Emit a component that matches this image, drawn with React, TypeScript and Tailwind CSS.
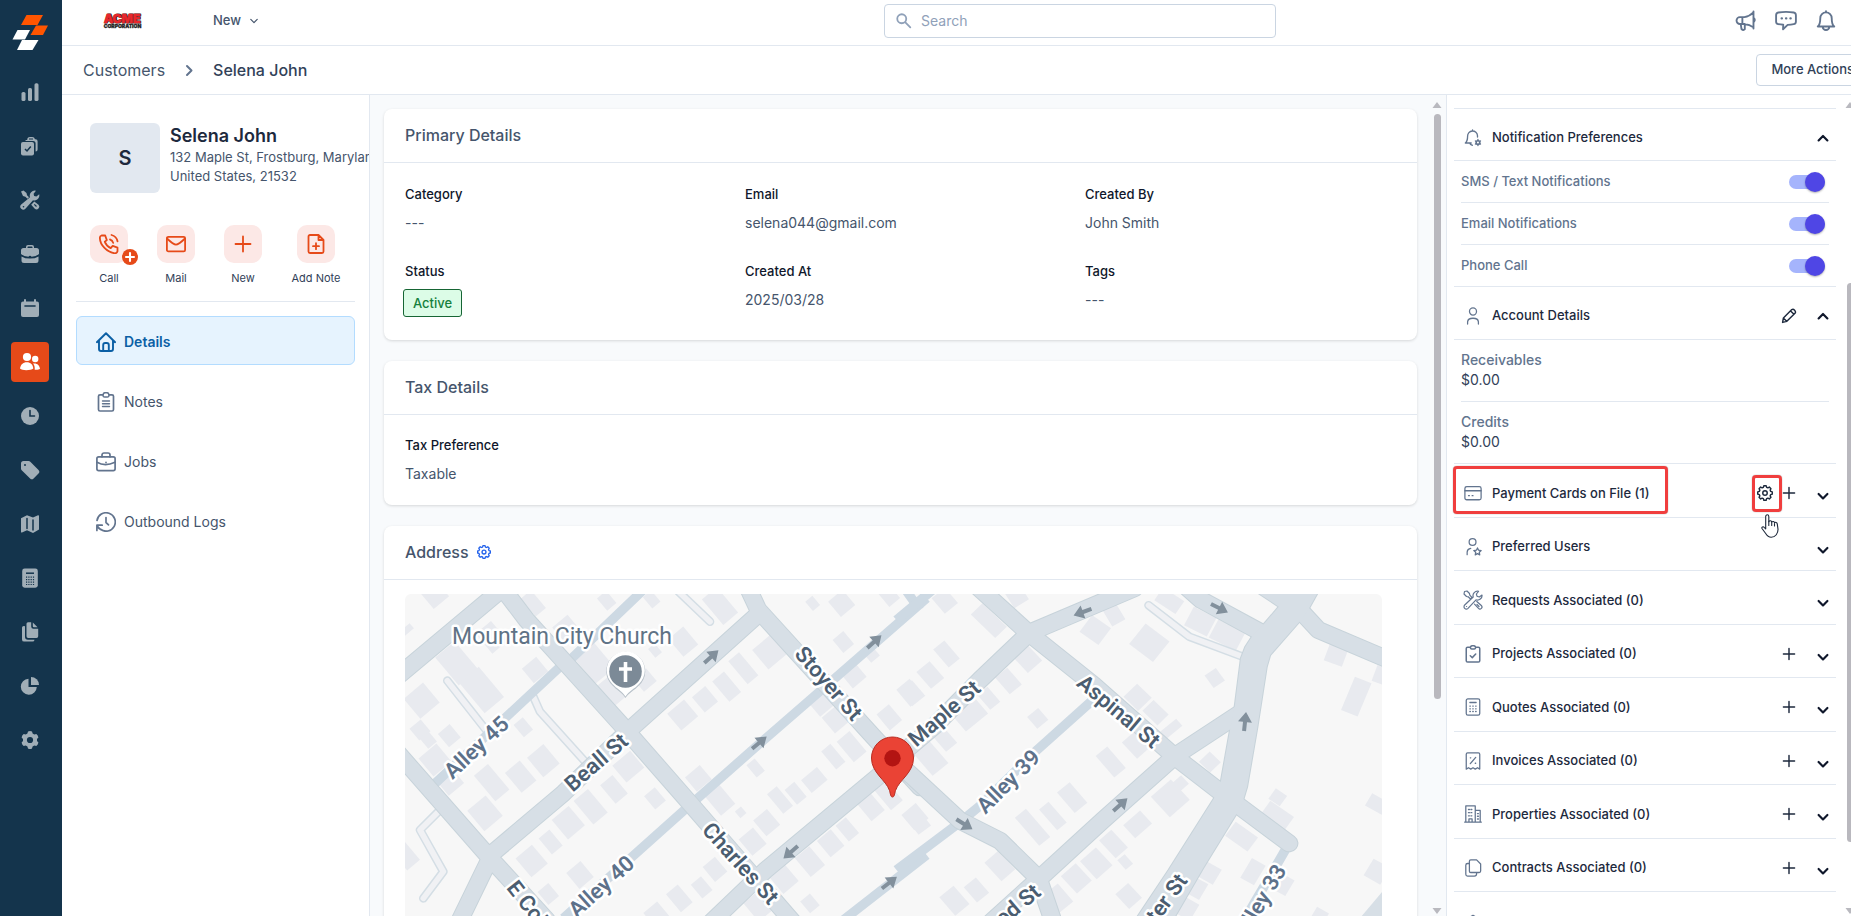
import React from "react";

type Kids = { children: React.ReactNode; className?: string; w?: number };

/* Outline icon on a 20 unit grid */
function Line({ children, className = "size-5", w = 1.5 }: Kids) {
  return (
    <svg viewBox="0 0 20 20" className={className} fill="none" stroke="currentColor" strokeWidth={w} strokeLinecap="round" strokeLinejoin="round" aria-hidden="true">
      {children}
    </svg>
  );
}

/* Solid icon on a 20 unit grid */
function Solid({ children, className = "size-5" }: Kids) {
  return (
    <svg viewBox="0 0 20 20" className={className} fill="currentColor" aria-hidden="true">
      {children}
    </svg>
  );
}

const NAVY = "#14344c";

/* Eight-toothed cog outline */
const COG =
  "M" +
  Array.from({ length: 8 }, (_, k) =>
    [[-16, 7.4], [-9, 9.2], [9, 9.2], [16, 7.4]]
      .map(([d, r]) => {
        const a = ((k * 45 + d) * Math.PI) / 180;
        return `${(10 + r * Math.sin(a)).toFixed(2)} ${(10 - r * Math.cos(a)).toFixed(2)}`;
      })
      .join("L"),
  ).join("L") +
  "z";

const railIcons: { name: string; icon: React.ReactNode; active?: boolean }[] = [
  { name: "Dashboard", icon: <Solid><rect x="1.5" y="10" width="4" height="9" rx="1.6" /><rect x="8" y="6" width="4" height="13" rx="1.6" /><rect x="14.5" y="1.2" width="4" height="17.8" rx="1.6" /></Solid> },
  {
    name: "Requests",
    icon: (
      <Solid>
        <path d="M6 4h1.200A3 3 0 0 1 10 1h2.200A3 3 0 0 1 15 3.200h.6a2 2 0 0 1 2 2V13.500a2 2 0 0 1-2 2V7.500a2.500 2.500 0 0 0-2.500-2.500H5.200A2 2 0 0 1 6 4z" />
        <rect x="1" y="6" width="13" height="13.500" rx="2" />
        <path d="M5 13l2 2 3.800-4.500" fill="none" stroke={NAVY} strokeWidth="1.500" />
        <path d="M9 3h4" stroke={NAVY} strokeWidth="1" />
      </Solid>
    ),
  },
  {
    name: "Tools",
    icon: (
      <Solid>
        <path d="M1 1.500L3.500.5 6.500 3l.5 2.200 2 2-1.600 1.600-2-2L3 6z" />
        <path d="M19.200 4.200l-2.800 2.300-2.300-.6-.5-2.200L16 .8a5 5 0 0 0-6 6.400L1.200 14.600a2.900 2.900 0 1 0 4.200 4.200L13 10.200a5 5 0 0 0 6.200-6z" />
        <path d="M14.300 11.400l4.200 3.400a2.700 2.700 0 0 1-3.700 3.900l-3.600-4z" />
        <circle cx="3.500" cy="16.700" r=".8" fill={NAVY} />
        <path d="M14.300 14.300l2.200 2.200" stroke={NAVY} strokeWidth="1.100" />
      </Solid>
    ),
  },
  {
    name: "Jobs",
    icon: (
      <Solid>
        <path d="M6 4V3a2 2 0 0 1 2-2h4a2 2 0 0 1 2 2v1h2.500A2.500 2.500 0 0 1 19 6.500V10q-3 2.500-7.500 2.700-.4-.9-1.500-.9t-1.500.9Q4 12.500 1 10V6.500A2.500 2.500 0 0 1 3.500 4zm1.500 0h5V3.200a.7.7 0 0 0-.7-.7H8.200a.7.7 0 0 0-.7.7z" />
        <path d="M1.500 12.400Q5 14.600 10 14.600t8.500-2.200V16.500a2.500 2.500 0 0 1-2.500 2.500H4a2.500 2.500 0 0 1-2.500-2.500z" />
      </Solid>
    ),
  },
  { name: "Calendar", icon: <Solid><rect x="4" y="1" width="2" height="5" rx="1" /><rect x="14" y="1" width="2" height="5" rx="1" /><rect x="1" y="3.500" width="18" height="15.500" rx="2" /><path d="M5 8h10" stroke={NAVY} strokeWidth="1.600" strokeLinecap="round" /></Solid> },
  { name: "Customers", active: true, icon: <Solid><circle cx="7" cy="5" r="4.100" /><path d="M0 16.500C.5 12.500 3 10.200 6.800 10.200s6.200 2.300 6.500 6.300c-2 2-11.300 2.400-13.300 0z" /><circle cx="15.200" cy="7" r="3.200" /><path d="M13 11.600c3.800-.8 6.600 1.500 7 5.200-1 1-3.500 1.200-5.300.9.200-2.500-.2-4.500-1.700-6.100z" /></Solid> },
  { name: "Timesheets", icon: <Solid><circle cx="10" cy="10" r="9" /><path d="M10 4.500V10h4.500" fill="none" stroke={NAVY} strokeWidth="1.600" strokeLinecap="round" /></Solid> },
  { name: "Price list", icon: <Solid><path d="M1 3.500A2.500 2.500 0 0 1 3.500 1h5a2.500 2.500 0 0 1 1.800.7l8.200 8.400a2.500 2.500 0 0 1 0 3.500l-4.900 4.900a2.500 2.500 0 0 1-3.500 0L1.700 10.300A2.500 2.500 0 0 1 1 8.500z" /><circle cx="5" cy="5" r="1" fill={NAVY} /></Solid> },
  { name: "Map", icon: <Solid><path d="M1 4.200L7 1.200l6 2.300 5-2.200q1-.3 1 .8v13.500l-6 3.400-6-2.700-5 2.200q-1 .3-1-.8z" /><path d="M7 4.500V14.500M13 6V16" stroke={NAVY} strokeWidth="1.500" strokeLinecap="round" /></Solid> },
  { name: "Quotes", icon: <Solid><rect x="2.200" y=".5" width="15.600" height="19.200" rx="2.400" /><path d="M6 5.200h8" stroke={NAVY} strokeWidth="1.500" /><path d="M6 9.200h8.500M6 11.700h8.500M6 14.200h8.500M6 16.500h8.500" stroke={NAVY} strokeWidth="1.200" strokeDasharray="1.200 1.100" /></Solid> },
  { name: "Documents", icon: <Solid><path d="M6.500 1.800A1.600 1.600 0 0 1 8 .3h3.200v4.300a2.200 2.200 0 0 0 2.200 2.200h4.800v7.400a1.700 1.700 0 0 1-1.700 1.700H8.200a1.700 1.700 0 0 1-1.700-1.700z" /><path d="M12.800.6l4.800 4.600h-3.800a1 1 0 0 1-1-1z" /><path d="M5 4.200v10.500a3 3 0 0 0 3 3h6.500a2 2 0 0 1-2 1.900H4.200a2.200 2.200 0 0 1-2.200-2.200V6.200a2 2 0 0 1 3-2z" /></Solid> },
  { name: "Reports", icon: <Solid><path d="M8.500 2.700V11h8.300a8 8 0 1 1-8.300-8.300z" /><path d="M11 1a8 8 0 0 1 8 8h-8z" /></Solid> },
  { name: "Settings", icon: <Solid><path d="M8 1.500q2-1 4 0l.6 2 1.700 1 2-.5q1.800 1.200 2.100 3.400L17 9v2l1.400 1.600q-.3 2.200-2.100 3.400l-2-.5-1.700 1-.6 2q-2 1-4 0l-.6-2-1.700-1-2 .5q-1.800-1.200-2.100-3.400L3 11V9L1.600 7.400Q1.900 5.200 3.700 4l2 .5 1.700-1z" /><circle cx="10" cy="10" r="3.100" fill={NAVY} /></Solid> },
];

function Rail() {
  return (
    <nav aria-label="Main" className="flex w-[62px] shrink-0 flex-col items-center bg-[#14344c] pr-[2px]">
      <a href="#home" aria-label="Home" className="mt-[14px] mb-[22px] h-9">
        <svg viewBox="0 0 36 36" className="size-9" aria-hidden="true">
          <path d="M14.500 1H31l-5.500 10H9z" fill="#ff5500" />
          <path d="M24 11.500h12L31 21H18.500z" fill="#ff5500" />
          <path d="M5.500 16H18l-5 9.500H.5z" fill="#fff" />
          <path d="M10 26h16.500L20.500 36H5z" fill="#fff" />
        </svg>
      </a>
      <ul className="flex flex-col gap-[14px]">
        {railIcons.map((it) => (
          <li key={it.name}>
            <a
              href="#nav"
              aria-label={it.name}
              className={
                it.active
                  ? "flex h-10 w-[38px] items-center justify-center rounded-[4px] bg-[#e64a19] text-white"
                  : "flex h-10 w-[38px] items-center justify-center text-[#a1aeb7]"
              }
            >
              {it.icon}
            </a>
          </li>
        ))}
      </ul>
    </nav>
  );
}

function TopBar() {
  return (
    <header className="flex h-[46px] shrink-0 items-start border-b border-slate-200 bg-white">
      <div className="flex h-[42px] flex-1 items-center pl-9">
        <svg viewBox="0 0 48 22" className="h-[22px] w-12" role="img" aria-label="Acme Corporation">
          <g fontFamily="Inter, sans-serif" fontWeight="900" textAnchor="middle" strokeLinejoin="round">
            <text x="24.800" y="13.300" fontSize="12" fill="#2a1414" stroke="#2a1414" strokeWidth="1">ACME</text>
            <text x="24" y="12.500" fontSize="12" fill="#e8282d" stroke="#e8282d" strokeWidth=".5">ACME</text>
            <text x="24.500" y="18" fontSize="5" fill="#222" stroke="#222" strokeWidth=".3">CORPORATION</text>
          </g>
        </svg>
        <button type="button" className="ml-[67px] flex items-center gap-[5px] text-[13px] font-medium text-slate-600">
          New
          <Line className="size-4"><path d="M6 8l4 4 4-4" /></Line>
        </button>
      </div>
      <label className="mt-1 flex h-[34px] w-[392px] items-center gap-2 rounded-[4px] border border-slate-300 px-[10px] text-slate-400">
        <Line className="size-[18px]" w={2}><circle cx="7.500" cy="7.500" r="5" /><path d="M11.500 11.500L17 17" /></Line>
        <input type="search" aria-label="Search" placeholder="Search" className="min-w-0 flex-1 bg-transparent text-sm outline-none placeholder:text-slate-400" />
      </label>
      <div className="flex h-[42px] w-[581px] items-center justify-end gap-[18px] pr-5 text-slate-500">
        <button type="button" aria-label="Announcements">
          <Line className="size-[22px]" w={1.7}><path d="M4.500 6.500H8.500C12 6 14.500 4.500 16.800 2.200v13.600C14.500 14 12 13 8.500 12.700H4.500a3.100 3.100 0 0 1 0-6.200zM6.700 6.500v6M5.200 12.700l.7 4.600q1.800 1.700 3 .2V12.700M16.800 1.200v15.600M17 7.300q2 1.700 0 3.600" /></Line>
        </button>
        <button type="button" aria-label="Messages">
          <Line className="size-[22px]" w={1.7}><path d="M3 2.300q7-1.300 14 0 2 .4 2 2.400v6q0 2-2 2.200-2.500.4-5.500.6L7.300 17.500l.2-4.100Q5 13.200 3 12.900q-2-.2-2-2.200v-6q0-2 2-2.400z" /><path d="M6 7.700h.3M10 7.700h.3M14 7.700h.3" strokeWidth="2" /></Line>
        </button>
        <button type="button" aria-label="Notifications">
          <Line className="size-[22px]" w={1.7}><path d="M2.500 15h15q-2.300-1.700-2.300-7.500A5.200 5.200 0 0 0 10 2.200a5.200 5.200 0 0 0-5.200 5.300Q4.800 13.300 2.500 15zM7 15.200a3 3 0 0 0 6 0M10 1v1" /></Line>
        </button>
      </div>
    </header>
  );
}

function Crumbs() {
  return (
    <div className="flex h-[49px] shrink-0 items-center justify-between border-b border-slate-200 bg-white pl-[21px] text-slate-700">
      <nav aria-label="Breadcrumb" className="flex items-center pb-px text-base leading-6">
        <a href="#customers" className="text-slate-600">Customers</a>
        <Line className="mx-[14px] size-5 text-slate-500" w={2}><path d="M8 6l4.500 4.500L8 15" /></Line>
        <span className="font-medium">Selena John</span>
      </nav>
      <button type="button" className="-mr-3 h-8 rounded-[4px] border border-slate-300 px-[14px] text-[13px] font-medium">
        More Actions
      </button>
    </div>
  );
}

const actions = [
  { name: "Call", w: "w-[38px]", badge: true, icon: <Line w={1.8}><path d="M2.500 1.500h3.700l1.600 4.600-2 1.700q1.700 4.200 5.900 6.300l2-2.200 4.800 1.800v3.600q-.5 2-2.600 2C8.500 18.500.500 11 .9 3.400q.1-1.500 1.600-1.900zM11 5.500q2.500.6 3.200 3.400M12.500 1q5 1.300 6 6.300" /></Line> },
  { name: "Mail", w: "w-[38px]", icon: <Line w={1.8}><rect x=".9" y="2.800" width="18.200" height="14.600" rx="1.500" /><path d="M1 4.500q6.500 6.200 9 6.200t9-6.200" /></Line> },
  { name: "New", w: "w-[38px]", icon: <Line w={1.8}><path d="M10 2.500v15M2.500 10h15" /></Line> },
  { name: "Add Note", w: "w-[50px]", icon: <Line w={1.8}><path d="M12.500 1H4A1.500 1.500 0 0 0 2.500 2.500v15A1.500 1.500 0 0 0 4 19h12a1.500 1.500 0 0 0 1.500-1.500V6zM12.500 1v5h5M10 9.200v6M7 12.200h6" /></Line> },
];

const tabs = [
  { name: "Details", active: true, icon: <Line w={1.9}><path d="M.9 10.200L10 1.200l9.100 9M3 8.500V17a2 2 0 0 0 2 2h10a2 2 0 0 0 2-2V8.500M7.200 19v-6a2 2 0 0 1 2-2h1.600a2 2 0 0 1 2 2v6" /></Line> },
  { name: "Notes", icon: <Line w={1.7}><path d="M7 2.800H4a1.500 1.500 0 0 0-1.500 1.500v13.200A1.500 1.500 0 0 0 4 19h12a1.500 1.500 0 0 0 1.500-1.500V4.300A1.500 1.500 0 0 0 16 2.800h-3" /><path d="M7 3.800Q7 1 8.800.8h2.400Q13 1 13 3.800q-.2 1.200-1.500 1.200h-3Q7.200 5 7 3.800zM6.500 9h7M6.500 11.700h7M6.500 14.500h7" strokeWidth="1.400" /></Line> },
  { name: "Jobs", icon: <Line w={1.7}><rect x=".9" y="4.800" width="18.200" height="13.800" rx="1.800" /><path d="M6 4.800V3a2 2 0 0 1 2-2h4a2 2 0 0 1 2 2v1.800M1 10.300q8 4.600 18 0M10 10.300v.2" /></Line> },
  { name: "Outbound Logs", icon: <Line w={1.7}><path d="M1 8.500A9.200 9.200 0 1 1 4.500 17.300M.9 18.500v-5.300h5.300M1 13.500q1.500 3 4 4.200M10 5.500v5l2.500 2.300" /></Line> },
];

function ProfilePanel() {
  return (
    <aside className="w-[308px] shrink-0 overflow-hidden border-r border-slate-200 bg-white pl-[14px]">
      <div className="flex pt-7 pl-[14px]">
        <div className="flex size-[70px] shrink-0 items-center justify-center rounded-[6px] bg-slate-200 text-xl font-semibold text-slate-800">S</div>
        <div className="ml-[10px] whitespace-nowrap text-[13px] leading-[19px] text-slate-600">
          <h1 className="text-lg leading-[25px] font-semibold text-slate-800">Selena John</h1>
          <p>132 Maple St, Frostburg, Maryland,</p>
          <p>United States, 21532</p>
        </div>
      </div>
      <div className="mr-[14px] flex gap-[29px] border-b border-slate-200 pt-8 pb-[14px] pl-[14px]">
        {actions.map((a) => (
          <button type="button" key={a.name} className={`flex flex-col items-center gap-[6px] text-[11px] leading-[18px] whitespace-nowrap text-slate-700 ${a.w}`}>
            <span className="relative flex size-[38px] items-center justify-center rounded-[10px] bg-[#fce8e6] text-[#e64a19]">
              {a.icon}
              {a.badge && (
                <span className="absolute -right-[10px] -bottom-[2px] flex size-4 items-center justify-center rounded-full bg-[#e64a19] text-white">
                  <Line className="size-4" w={2.6}><path d="M10 5v10M5 10h10" /></Line>
                </span>
              )}
            </span>
            {a.name}
          </button>
        ))}
      </div>
      <ul className="mt-[14px] mr-[14px] flex flex-col gap-[11px]">
        {tabs.map((t) => (
          <li key={t.name}>
            <a
              href="#tab"
              className={
                t.active
                  ? "flex h-[49px] items-center gap-2 rounded-[6px] border border-[#b3dcff] bg-[#e6f3fe] pt-[2px] pl-[19px] text-sm font-semibold text-[#0b5fa5]"
                  : "flex h-[49px] items-center gap-2 border border-transparent pt-[2px] pl-[19px] text-sm text-slate-500"
              }
            >
              {t.icon}
              <span className={t.active ? "" : "text-slate-600"}>{t.name}</span>
            </a>
          </li>
        ))}
      </ul>
    </aside>
  );
}

function Scroll({ thumb, className = "" }: { thumb: string; className?: string }) {
  return (
    <div aria-hidden="true" className={`flex w-[14px] shrink-0 flex-col items-center justify-between pt-[7px] pb-[2px] text-[#b9b9bf] ${className}`}>
      <svg viewBox="0 0 10 6" className="h-[6px] w-[10px] shrink-0"><path d="M.5 6L5 0l4.500 6z" fill="currentColor" /></svg>
      <div className="min-h-0 flex-1 pt-[6px]"><div className={`w-[7px] rounded-full bg-[#b9b8be] ${thumb}`} /></div>
      <svg viewBox="0 0 10 6" className="h-[6px] w-[10px] shrink-0"><path d="M.5 0L5 6l4.500-6z" fill="currentColor" /></svg>
    </div>
  );
}

function Field({ label, children }: { label: string; children: React.ReactNode }) {
  return (
    <div>
      <dt className="text-[13px] leading-[18px] font-medium text-slate-900">{label}</dt>
      <dd className="mt-[10px] text-sm leading-5 text-slate-600">{children}</dd>
    </div>
  );
}

function Card({ title, extra, children }: { title: string; extra?: React.ReactNode; children: React.ReactNode }) {
  return (
    <section className="rounded-[8px] bg-white shadow-[0_1px_3px_rgba(0,0,0,0.14)]">
      <div className="flex h-[54px] items-center gap-2 border-b border-slate-200 pb-[2px] pl-[21px]">
        <h2 className="text-base font-medium text-slate-600">{title}</h2>
        {extra}
      </div>
      {children}
    </section>
  );
}

const WEST = "matrix(.33333 0 0 .33333 -5 -14)";
const EAST = "matrix(.34435 0 0 .33333 495 -14)";

const westRoads = [
  "M-20 300L305 28", "M300 15L380 120L660 430L870 670L1165 1010L1200 1050", "M1072 105L690 448L490 640L265 830",
  "M-10 515L262 825L440 1020", "M270 835L180 1020", "M1040 15L1075 90L1420 470L1560 622", "M1520 518L1095 872L930 1030",
];
const eastRoads = [
  "M-10 545L175 722L290 782L402 895L450 1040", "M0 525L100 438L232 300L372 162", "M372 160L680 25", "M220 15L372 158L560 313L798 530L935 640L1130 790",
  "M250 1040L405 895L590 720L800 527L990 398", "M820 10L875 60L1050 158", "M1170 100L1215 150L1420 240",
];
const MAIN =
  "M1100 80L1057 132L1025 165L1003 200L990 235L972 380L960 440L930 615L912 655L780 870L680 1025L790 1025L880 865L975 705L995 665L1008 620L1038 440L1065 260L1075 225L1160 125L1185 90L1220 25L1020 25z";
const westAlleys = ["M740 20L515 235L475 265L100 615", "M1580 55L1310 290L1080 490L870 675L490 1015", "M1580 825L1330 1020", "M1510 20L1560 90"];
const eastAlleys = ["M-10 120L100 25", "M-10 870L170 730L235 675L400 508L560 360", "M1130 790L1105 835L1000 1020"];
const westPaths = ["M142 302L262 455", "M400 350L420 395L560 550", "M130 680L60 750L130 875L70 955", "M820 20L930 125"];
const eastPaths = ["M722 76L840 170L1000 232"];

/* Buildings as [cx, cy, width, height, rotation] */
const westBlocks: number[][] = [
  [105, 45, 60, 60, 50], [65, 362, 78, 76, 50], [60, 450, 46, 44, 50], [85, 480, 40, 34, 50], [148, 467, 52, 46, 50], [170, 250, 110, 76, 50], [245, 330, 118, 76, 50],
  [275, 172, 78, 60, 50], [405, 270, 56, 56, 50], [105, 540, 70, 70, 50], [150, 605, 60, 60, 50], [275, 608, 100, 55, 50], [362, 590, 78, 58, 50], [430, 542, 76, 64, 50],
  [370, 442, 48, 36, 50], [255, 700, 80, 72, 50], [395, 843, 74, 64, 50], [452, 786, 62, 42, 50], [505, 728, 76, 66, 50], [572, 680, 92, 56, 50], [642, 628, 72, 48, 50],
  [685, 560, 66, 70, 50], [765, 655, 52, 42, 50], [540, 885, 62, 56, 50], [445, 942, 50, 42, 50], [15, 825, 80, 50, 50], [502, 150, 70, 60, 50], [580, 245, 110, 76, 50],
  [645, 325, 80, 72, 50], [735, 300, 50, 50, 50], [850, 185, 70, 58, 50], [620, 62, 48, 36, 50], [755, 58, 44, 32, 50], [400, 70, 70, 40, 50], [765, 212, 34, 26, 50],
  [960, 78, 100, 58, 50], [1238, 70, 36, 28, 50], [1325, 70, 60, 56, 50], [1468, 48, 50, 42, 50], [1110, 215, 76, 76, 50], [1030, 265, 90, 42, 50], [980, 320, 80, 46, 50],
  [915, 358, 60, 52, 50], [848, 405, 66, 66, 50], [1330, 186, 50, 42, 50], [1360, 285, 60, 54, 50], [1412, 220, 46, 34, 50], [1262, 370, 60, 54, 50], [1305, 420, 62, 52, 50],
  [1355, 500, 80, 50, 50], [1300, 530, 70, 36, 50], [1468, 412, 62, 48, 50], [1530, 338, 66, 52, 50], [895, 595, 56, 58, 50], [1067, 564, 48, 32, 50], [960, 660, 76, 56, 50],
  [1022, 697, 26, 24, 50], [1140, 660, 76, 38, 50], [1187, 640, 58, 38, 50], [1243, 600, 50, 62, 50], [1100, 728, 62, 54, 50], [1058, 785, 64, 56, 50], [1412, 680, 70, 52, 50],
  [1465, 645, 80, 46, 50], [1342, 748, 62, 40, 50], [1292, 790, 64, 54, 50], [1230, 845, 74, 56, 50], [1150, 895, 72, 60, 50], [1080, 975, 72, 70, 50], [945, 868, 58, 48, 50],
  [905, 922, 54, 40, 50], [838, 955, 70, 46, 50], [1230, 970, 46, 38, 50], [770, 1005, 60, 54, 50], [20, 150, 20, 40, 50], [1545, 710, 60, 56, 50],
];
const eastBlocks: number[][] = [
  [130, 62, 60, 50, 50], [258, 122, 100, 48, 45], [340, 50, 50, 50, 58], [135, 222, 70, 42, 50], [88, 285, 66, 50, 50], [35, 340, 60, 50, 50], [372, 238, 60, 56, 48],
  [315, 303, 66, 46, 50], [258, 355, 58, 38, 50], [205, 405, 58, 84, 50], [130, 478, 62, 42, 50], [90, 535, 86, 60, 50], [400, 415, 46, 42, 50], [567, 150, 68, 62, 36],
  [620, 102, 62, 44, 60], [724, 188, 88, 78, 38], [782, 62, 74, 46, 34], [872, 125, 74, 62, 27], [950, 165, 88, 62, 27], [914, 294, 46, 40, 55], [690, 352, 60, 56, 45],
  [742, 398, 62, 46, 45], [788, 446, 28, 60, 50], [685, 495, 66, 50, 48], [612, 546, 84, 44, 50], [900, 546, 46, 44, 45], [785, 655, 82, 78, 48], [815, 610, 34, 34, 48],
  [500, 653, 80, 48, 50], [444, 708, 82, 36, 50], [385, 742, 110, 42, 50], [690, 733, 52, 66, 48], [620, 792, 72, 48, 48], [570, 850, 72, 62, 48], [512, 895, 70, 58, 48],
  [654, 846, 38, 28, 50], [290, 858, 74, 54, 48], [222, 930, 60, 46, 50], [158, 962, 72, 54, 50], [460, 955, 70, 54, 50], [664, 948, 60, 50, 48], [50, 722, 72, 46, 52],
  [1095, 708, 84, 52, 35], [1097, 652, 40, 38, 35], [992, 770, 80, 52, 36], [1025, 875, 46, 68, 30], [898, 878, 54, 52, 30], [862, 925, 46, 54, 30], [832, 985, 54, 56, 30],
  [1115, 915, 40, 54, 30], [1266, 225, 56, 54, 20], [1325, 350, 52, 108, 22], [1395, 285, 36, 50, 20], [1385, 672, 56, 42, 30], [1385, 875, 56, 58, 30], [1220, 1005, 40, 34, 30],
];

function Roads({ t, roads, alleys, paths, blocks, main }: { t: string; roads: string[]; alleys: string[]; paths: string[]; blocks: number[][]; main?: string }) {
  return (
    <g transform={t} fill="none" strokeLinejoin="round">
      {blocks.map((b, i) => (
        <rect key={i} x={b[0] - b[2] / 2} y={b[1] - b[3] / 2} width={b[2]} height={b[3]} transform={`rotate(${b[4]} ${b[0]} ${b[1]})`} fill="#e8eaef" />
      ))}
      <path d={paths.join("")} stroke="#d4dee5" strokeWidth="26" strokeLinecap="round" />
      <path d={paths.join("")} stroke="#f0f1f4" strokeWidth="17" strokeLinecap="round" />
      <path d={alleys.join("")} stroke="#cdd9e3" strokeWidth="28" />
      <path d={roads.join("")} stroke="#c7d3da" strokeWidth="54" strokeLinecap="round" />
      {main && <path d={main} stroke="#c7d3da" strokeWidth="6" />}
      <path d={roads.join("")} stroke="#d7dfe6" strokeWidth="48" strokeLinecap="round" />
      {main && <path d={main} fill="#d7dfe6" />}
    </g>
  );
}

const streetLabels: [string, number, number, number, boolean, "start" | "middle" | "end"][] = [
  ["Stoyer St", 424, 89, 49, false, "middle"], ["Beall St", 191, 168, -41, false, "middle"], ["Charles St", 336, 269, 48, false, "middle"],
  ["E College Ave", 107, 289, 52, false, "start"], ["Maple St", 539, 119, -41, false, "middle"], ["Aspinal St", 714, 117, 40, false, "middle"],
  ["Wood St", 632, 294, -40, false, "end"], ["Center St", 777, 282, -54, false, "end"], ["Alley 45", 71, 153, -43, true, "middle"],
  ["Alley 40", 196, 292, -42, true, "middle"], ["Alley 39", 603, 187, -45, true, "middle"], ["Alley 33", 875, 272, -60, true, "end"],
];
const arrows = [
  [306, 63, -42], [354, 149, -40], [469, 48, -42], [386, 258, 139], [484, 289, -38],
  [678, 18, 160], [814, 14, 27], [840, 128, -84], [715, 211, -42], [559, 230, 32],
];

function StreetMap() {
  return (
    <svg viewBox="0 0 977 460" preserveAspectRatio="xMidYMin slice" role="img" aria-label="Map of 132 Maple St" className="block h-[460px] w-full rounded-[6px] bg-[#f7f7f7]">
      <Roads t={WEST} roads={westRoads} alleys={westAlleys} paths={westPaths} blocks={westBlocks} />
      <Roads t={EAST} roads={eastRoads} alleys={eastAlleys} paths={eastPaths} blocks={eastBlocks} main={MAIN} />
      <path d="M977 298L950 330H977z" fill="#d7dfe6" />
      {arrows.map((a, i) => (
        <path key={i} d="M-9-2H0V-7L10 0 0 7V2H-9z" fill="#82909c" transform={`translate(${a[0]} ${a[1]}) rotate(${a[2]})`} />
      ))}
      <g fontFamily="Roboto, sans-serif" fontSize="22" stroke="#fff" strokeWidth="5" strokeLinejoin="round" paintOrder="stroke">
        {streetLabels.map(([s, x, y, r, alley, anchor]) => (
          <text key={s} transform={`translate(${x} ${y}) rotate(${r})`} y="8" textAnchor={anchor} fontWeight="600" fill={alley ? "#5d718a" : "#4b5d70"}>{s}</text>
        ))}
        <text x="157" y="50" fontSize="23" textAnchor="middle" fill="#5f7386">Mountain City Church</text>
      </g>
      <path d="M220.500 104c-3-5-9-8-13-12.500a19.500 19.500 0 1 1 26.500 0c-4 4.500-10.500 7.500-13.500 12.500z" fill="#b8c1c9" />
      <path d="M220.500 102.500c-3-5-9-8-13-12.500a19 19 0 1 1 26.500 0c-4 4.500-10.500 7.500-13.500 12.500z" fill="#fff" />
      <circle cx="220.500" cy="77.500" r="16.300" fill="#7c8a97" />
      <path d="M220.500 68v20M214 75h13" stroke="#fff" strokeWidth="3.600" />
      <path d="M487.500 203c-2 0-2-3-3-6.500-3.500-10.500-18-17.500-18-32.500a21 21 0 1 1 42 0c0 15-14.500 22-18 32.500-1 3.500-1 6.500-3 6.500z" fill="#ea4335" stroke="#b92b20" />
      <circle cx="487.500" cy="164.300" r="8.200" fill="#b31412" />
    </svg>
  );
}

function Details() {
  return (
    <main className="flex min-w-0 flex-1 bg-slate-50">
      <div className="flex min-w-0 flex-1 flex-col gap-[21px] overflow-hidden pt-[14px] pr-[13px] pl-[14px]">
        <Card title="Primary Details">
          <dl className="-mr-2 grid grid-cols-3 gap-y-[29px] pt-[22px] pb-[23px] pl-[21px]">
            <Field label="Category">---</Field>
            <Field label="Email">selena044@gmail.com</Field>
            <Field label="Created By">John Smith</Field>
            <Field label="Status">
              <span className="-mt-px -ml-[2px] flex h-7 w-fit items-center rounded-[3px] border border-[#166534] bg-[#dcfce7] px-[9px] text-[13px] font-medium text-[#15803d]">Active</span>
            </Field>
            <Field label="Created At">2025/03/28</Field>
            <Field label="Tags">---</Field>
          </dl>
        </Card>
        <Card title="Tax Details">
          <dl className="py-[21px] pl-[21px]">
            <Field label="Tax Preference">Taxable</Field>
          </dl>
        </Card>
        <Card
          title="Address"
          extra={
            <button type="button" aria-label="Address settings" className="text-[#2563eb]">
              <Line className="size-[14px]" w={1.9}><path d={COG} /><circle cx="10" cy="10" r="2.800" /></Line>
            </button>
          }
        >
          <div className="pt-[14px] pr-[35px] pb-5 pl-[21px]"><StreetMap /></div>
        </Card>
      </div>
      <Scroll thumb="h-[585px]" className="mr-[2px]" />
    </main>
  );
}

const I = { className: "size-[18px]", w: 1.4 };
const groups: { name: string; icon: React.ReactNode; plus?: boolean; marked?: boolean }[] = [
  { name: "Payment Cards on File (1)", plus: true, marked: true, icon: <Line {...I}><rect x="1" y="3" width="18" height="14.500" rx="2" /><path d="M1 7.500h18M5 13h1M9 13h1" /></Line> },
  { name: "Preferred Users", icon: <Line {...I}><circle cx="9.500" cy="4.500" r="3.800" /><path d="M3.500 18.500v-3q.3-3.500 4-4M15 11l1.200 2.600 2.900.3-2.100 2 .5 2.900-2.500-1.400-2.500 1.400.5-2.900-2.100-2 2.900-.3z" /></Line> },
  { name: "Requests Associated (0)", icon: <Line className="size-5" w={1.2}><path d="M1.500 1.500L4 1l2.500 2.500.3 1.700L9 7.500 7.500 9 5.200 6.800 3.500 6.500 1 4zM19 5l-2.700 2-2.300-.8-.6-2.200L15.500 1.300a4.500 4.500 0 0 0-5.300 5.700L1.700 15a2.300 2.300 0 1 0 3.300 3.300l8-8.500A4.500 4.500 0 0 0 19 5zM13.800 11.500l4.500 4a2 2 0 0 1-2.800 2.900l-4-4.300M14 14.500l2 2M3.500 16.500h.1" /></Line> },
  { name: "Projects Associated (0)", plus: true, icon: <Line {...I} w={1.7}><path d="M7 2.500H4A1.500 1.500 0 0 0 2.500 4v13.500A1.500 1.500 0 0 0 4 19h12a1.500 1.500 0 0 0 1.500-1.500V4A1.500 1.500 0 0 0 16 2.500h-3M7 3q.3-2 2-2.200h2q1.700.2 2 2.200-.3 1.500-1.500 1.500h-3Q7.300 4.500 7 3zM7 12l2.200 2 3.800-4" /></Line> },
  { name: "Quotes Associated (0)", plus: true, icon: <Line {...I}><rect x="2.500" y="1" width="15" height="18" rx="1.800" /><path d="M6.500 5h7" /><path d="M6.500 9h8M6.500 12h8M6.500 15h8" strokeDasharray=".6 2.600" /></Line> },
  { name: "Invoices Associated (0)", plus: true, icon: <Line {...I}><path d="M2.500 19V2.500A1.500 1.500 0 0 1 4 1h12a1.500 1.500 0 0 1 1.500 1.500V19l-2.500-1.500-2.500 1.500L10 17.500 7.500 19 5 17.500zM7 13l6-7M7 6.500h.5M12.500 12.500h.5" /></Line> },
  { name: "Properties Associated (0)", plus: true, icon: <Line {...I}><path d="M.7 19h18.600M2 19V1h10.500v18M12.500 6H18v13M5.500 19v-3.500h3.500V19" /><path d="M5 5h5M5 8.500h5M5 12h5M15 9.500h1M15 12.500h1M15 15.500h1" strokeDasharray="1 1.700" strokeWidth="1.500" /></Line> },
  { name: "Contracts Associated (0)", plus: true, icon: <Line {...I}><path d="M7.500 1H14l4.500 4.500v7.800a1.700 1.700 0 0 1-1.700 1.700H7.500A1.500 1.500 0 0 1 6 13.500v-11A1.500 1.500 0 0 1 7.500 1zM6 5H4a2 2 0 0 0-2 2v10a2 2 0 0 0 2 2h7.500a2.500 2.500 0 0 0 2.500-2.500V15" /></Line> },
];

function Chevron({ up }: { up?: boolean }) {
  return <Line className="size-4 text-slate-900" w={2.7}><path d={up ? "M4.500 13l5.500-5.500 5.500 5.500" : "M4.500 7.500l5.500 5.500 5.500-5.500"} /></Line>;
}

function PanelHead({ icon, name, children }: { icon: React.ReactNode; name: string; children: React.ReactNode }) {
  return (
    <div className="flex items-center border-b border-slate-200 pt-[6px] pr-[5px] pl-[9px] text-slate-800">
      <span className="flex w-5 justify-center text-slate-500">{icon}</span>
      <h3 className="ml-[9px] flex-1 text-[13px] font-medium">{name}</h3>
      {children}
    </div>
  );
}

function Plus() {
  return <Line className="size-4" w={1.8}><path d="M10 3v14M3 10h14" /></Line>;
}

function AccountPanel() {
  return (
    <aside className="flex w-[411px] shrink-0 border-l border-slate-200 bg-white">
      <div className="flex min-w-0 flex-1 flex-col overflow-hidden px-[7px] pt-[13px]">
        <div className="grid h-[53px] shrink-0 border-t border-slate-200">
          <PanelHead name="Notification Preferences" icon={<Line {...I} w={1.5}><path d="M8 15.500H1.500Q4 13.500 4 8a5.500 5.500 0 0 1 11-.5v1.500M6.500 15.500q.5 2.500 2.800 2.500M9.500 1v1.300" /><circle cx="15.500" cy="15" r="2" strokeWidth="1.800" /><path d="M15.500 11.700v1M15.500 17.300v1M12.700 13.300l.8.500M17.500 16.200l.8.500M18.300 13.300l-.8.500M13.500 16.200l-.8.500" /></Line>}>
            <button type="button" aria-label="Collapse notification preferences"><Chevron up /></button>
          </PanelHead>
        </div>
        {["SMS / Text Notifications", "Email Notifications", "Phone Call"].map((n, i) => (
          <label key={n} className={i < 2 ? "mx-[7px] flex h-[42px] shrink-0 items-center justify-between border-b border-slate-200 pr-1 text-[13px] font-medium text-slate-500" : "flex h-[42px] shrink-0 items-center justify-between border-b border-slate-200 pr-[11px] pl-[7px] text-[13px] font-medium text-slate-500"}>
            {n}
            <input type="checkbox" role="switch" defaultChecked className="flex h-[14px] w-9 appearance-none items-center justify-end rounded-full bg-[#a5b4fc] before:block before:size-5 before:shrink-0 before:rounded-full before:bg-[#4f46e5] before:shadow-[0_1px_2px_rgba(0,0,0,0.3)]" />
          </label>
        ))}
        <div className="grid h-[53px] shrink-0">
          <PanelHead name="Account Details" icon={<Line {...I}><circle cx="10" cy="5" r="3.900" /><path d="M4 19v-2.500q.3-4 6-4t6 4V19" /></Line>}>
            <button type="button" aria-label="Edit account details" className="mr-[18px]">
              <Line className="size-4" w={1.8}><path d="M3 12.500L13.500 2q1.800-1 3.500.7t.8 3.500L7.300 16.700 2 18zM12 3.700l4.200 4.200M3.200 12.700l4 4" /></Line>
            </button>
            <button type="button" aria-label="Collapse account details"><Chevron up /></button>
          </PanelHead>
        </div>
        <dl className="shrink-0 border-b border-slate-200 px-[7px] text-sm leading-5">
          <div className="border-b border-slate-200 pt-[10px] pb-[11px]">
            <dt className="font-medium text-slate-500">Receivables</dt>
            <dd className="text-slate-700">$0.00</dd>
          </div>
          <div className="pt-[10px] pb-[11px]">
            <dt className="font-medium text-slate-500">Credits</dt>
            <dd className="text-slate-700">$0.00</dd>
          </div>
        </dl>
        <div className="relative grid h-[428px] shrink-0 grid-rows-8">
          {groups.map((g) => (
            <PanelHead key={g.name} name={g.name} icon={g.icon}>
              {g.marked && (
                <button type="button" aria-label="Card settings" className="mr-2">
                  <Line className="size-4" w={1.8}><path d={COG} /><circle cx="10" cy="10" r="2.800" /></Line>
                </button>
              )}
              {g.plus && <button type="button" aria-label={`Add to ${g.name}`} className="mr-[18px]"><Plus /></button>}
              <button type="button" aria-label={`Expand ${g.name}`} className="pt-[6px]"><Chevron /></button>
            </PanelHead>
          ))}
          <span aria-hidden="true" className="absolute top-[2px] -left-px h-12 w-[215px] rounded-[4px] border-3 border-[#f03e3e] shadow-[0_0_1px_rgba(0,0,0,0.6)]" />
          <span aria-hidden="true" className="absolute top-[11px] right-[54px] h-[37px] w-[30px] rounded-[4px] border-3 border-[#f03e3e] shadow-[0_0_1px_rgba(0,0,0,0.6)]" />
          <svg viewBox="0 0 18 24" aria-hidden="true" className="absolute top-[50px] right-[57px] h-6 w-[18px]">
            <path d="M6.300.8c1 0 1.500.8 1.500 1.600v5.400c.8-1.600 2.700-1.300 2.900.3.900-1.100 2.600-.8 2.800.7.900-1 2.700-.5 2.800 1.300l.7 5c.2 4.300-2.500 8.100-6.800 8.100-3 0-4.200-1.500-5.500-3.700L1 14.500c-.6-1.400 1.100-2.400 2.200-1.200l1.500 1.500V2.400c0-.8.600-1.600 1.600-1.600z" fill="#fff" stroke="#1e293b" strokeWidth="1.100" strokeLinejoin="round" />
            <path d="M7.800 7.500v4M10.700 8.500v3M13.500 9.500v2.500" stroke="#1e293b" strokeWidth="1.100" strokeLinecap="round" />
          </svg>
        </div>
        <div className="grid h-[57px] shrink-0">
          <PanelHead name="Assets Associated (0)" icon={<Line {...I}><path d="M3 5.500l7-4 7 4v9l-7 4-7-4zM3 5.500l7 4 7-4M10 9.500v9" /></Line>}>
            <button type="button" aria-label="Add asset" className="mr-[18px]"><Plus /></button>
            <button type="button" aria-label="Expand assets" className="pt-[6px]"><Chevron /></button>
          </PanelHead>
        </div>
      </div>
      <Scroll thumb="mt-[169px] h-[559px]" />
    </aside>
  );
}

export default function App() {
  return (
    <div className="flex h-screen overflow-hidden bg-white font-[Inter,sans-serif]">
      <Rail />
      <div className="-mr-[6px] flex min-w-0 flex-1 flex-col">
        <TopBar />
        <Crumbs />
        <div className="flex min-h-0 flex-1">
          <ProfilePanel />
          <Details />
          <AccountPanel />
        </div>
      </div>
    </div>
  );
}
